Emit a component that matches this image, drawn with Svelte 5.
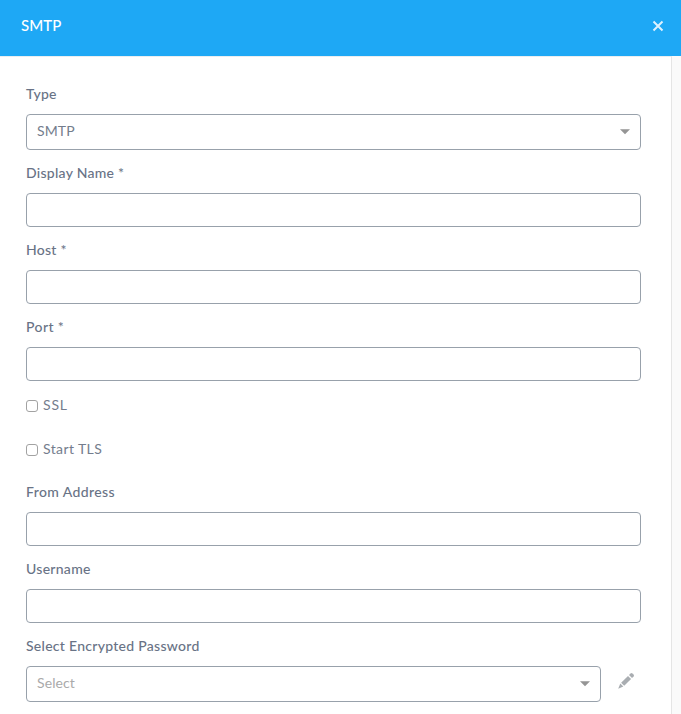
<script>
  let checks = $state({ ssl: false, tls: false });
  const first = [
    { label: 'Display Name *', ls: 0.27 },
    { label: 'Host *', ls: 0.27 },
    { label: 'Port *', ls: 0.4 }
  ];
  const second = [
    { label: 'From Address', ls: 0.38 },
    { label: 'Username', ls: 0.28 }
  ];
</script>

{#snippet field(item)}
  <label class="field">
    <span class="label" style="letter-spacing: {item.ls}px">{item.label}</span>
    <input class="control" type="text" />
  </label>
{/snippet}

{#snippet caret()}
  <svg class="caret" width="10" height="6" viewBox="0 0 10 6"><path d="M0 .3h10L5 5.3z" fill="#959595" /></svg>
{/snippet}

<div class="dialog">
  <header>
    <span class="title">SMTP</span>
    <button class="close" aria-label="Close">
      <svg width="12" height="12" viewBox="0 0 12 12"><path d="M1.5 1.5l9 9M10.5 1.5l-9 9" stroke="#dff2fe" stroke-width="2" fill="none" /></svg>
    </button>
  </header>
  <div class="body">
    <form>
      <div class="field">
        <span class="label">Type</span>
        <div class="control select"><span class="value">SMTP</span>{@render caret()}</div>
      </div>
      {#each first as item}{@render field(item)}{/each}
      <label class="check"><input type="checkbox" bind:checked={checks.ssl} /><span class="ssl">SSL</span></label>
      <label class="check"><input type="checkbox" bind:checked={checks.tls} /><span>Start TLS</span></label>
      {#each second as item}{@render field(item)}{/each}
      <div class="field">
        <span class="label">Select Encrypted Password</span>
        <div class="row">
          <div class="control select"><span class="value placeholder">Select</span>{@render caret()}</div>
          <svg class="pencil" width="18" height="18" viewBox="0 0 18 18" fill="#a9adb1">
            <path d="M4.1 10.7L11 3.9l3.1 3.1-6.9 6.8z" />
            <path d="M12 3l1.6-1.6q.9-.8 1.8 0l1.2 1.2q.8.9 0 1.8L15 6z" />
            <path d="M3.3 11.6l3 3L1.2 16.8z" />
          </svg>
        </div>
      </div>
    </form>
  </div>
</div>

<style>
  :global(body) { margin: 0; overflow: hidden; background: #fff; }
  .dialog {
    height: 714px;
    display: flex;
    flex-direction: column;
    font-family: Lato, "Open Sans", sans-serif;
    font-size: 14px;
    color: #697386;
    overflow: hidden;
  }
  header {
    box-sizing: border-box;
    height: 56px;
    flex: none;
    display: flex;
    align-items: center;
    justify-content: space-between;
    padding: 0 17px 4px 21px;
    background: #1ea8f5;
    color: #fff;
  }
  .title { font-size: 15px; font-weight: 500; padding-bottom: 2px; letter-spacing: 0.1px; }
  .close { display: flex; padding: 0; border: 0; background: none; }
  .body {
    flex: 1;
    display: flex;
    background: #fafafa;
    min-height: 0;
  }
  form {
    box-sizing: border-box;
    width: 672px;
    padding: 14px 30px 0 26px;
    background: #fff;
    border-top: 1px solid #e9eef1;
    border-right: 1px solid #e5e5e5;
  }
  .field { display: block; }
  .label {
    display: block;
    height: 20px;
    line-height: 20px;
    padding: 13px 0 10px;
    font-weight: 500;
    letter-spacing: 0.28px;
  }
  .control {
    box-sizing: border-box;
    display: block;
    width: 100%;
    height: 34px;
    margin: 0;
    border: 1px solid #98a1ab;
    border-radius: 4px;
    background: #fff;
    outline: none;
  }
  .control.select {
    display: flex;
    align-items: center;
    justify-content: space-between;
    width: auto;
    height: 36px;
    padding: 0 10px;
  }
  .value { padding-bottom: 3px; color: #747d8d; letter-spacing: 0.1px; }
  .placeholder { color: #aaa; }
  .check {
    box-sizing: border-box;
    display: flex;
    align-items: center;
    height: 44px;
    padding-top: 6px;
    gap: 5px;
  }
  .check span { padding-bottom: 3px; color: #747d8d; letter-spacing: 0.4px; }
  .check .ssl { letter-spacing: 0.8px; }
  .check input {
    appearance: none;
    box-sizing: border-box;
    width: 12px;
    height: 12px;
    margin: 0;
    border: 1px solid #a2a2a2;
    border-radius: 3px;
    background: #fff;
  }
  .row { display: flex; }
  .row .control.select { flex: none; width: 575px; }
  .pencil { margin: 6px 0 0 16px; }
</style>
